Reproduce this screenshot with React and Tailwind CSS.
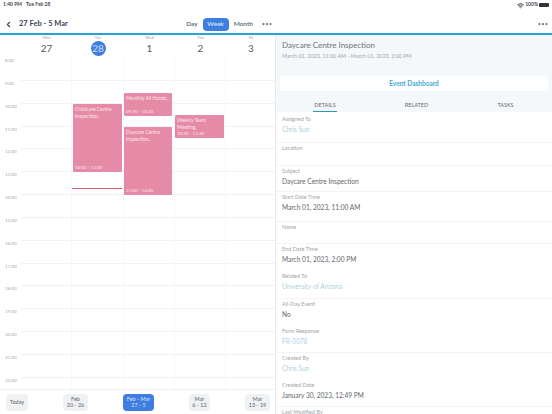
import React from 'react';
import { ChevronLeft, MoreHorizontal, Wifi } from 'lucide-react';

const days = [
  { name: 'Mon', num: '27' },
  { name: 'Tue', num: '28', today: true },
  { name: 'Wed', num: '1' },
  { name: 'Thu', num: '2' },
  { name: 'Fri', num: '3' },
];

const hours = ['8:00', '9:00', '10:00', '11:00', '12:00', '13:00', '14:00', '15:00', '16:00', '17:00', '18:00', '19:00', '20:00', '21:00', '22:00'];

const events = [
  { title: 'Childcare Centre Inspection,', time: '10:00 - 13:00', box: 'left-[73px] top-[46px] w-[49px] h-[68px]' },
  { title: 'Monthly All Hands,', time: '09:30 - 10:30', box: 'left-[124px] top-[35px] w-[48px] h-[23px]' },
  { title: 'Daycare Centre Inspection,', time: '11:00 - 14:00', box: 'left-[124px] top-[69px] w-[48px] h-[68px]' },
  { title: 'Weekly Team Meeting,', time: '10:30 - 11:30', box: 'left-[175px] top-[57px] w-[49px] h-[23px]' },
];

const weeks = [
  { top: 'Today', w: 'w-[22px]' },
  { top: 'Feb', bottom: '20 - 26', w: 'w-[25px]' },
  { top: 'Feb - Mar', bottom: '27 - 5', w: 'w-[31px]', active: true },
  { top: 'Mar', bottom: '6 - 12', w: 'w-[21px]' },
  { top: 'Mar', bottom: '13 - 19', w: 'w-[25px]' },
];

const fields = [
  { label: 'Assigned To', value: 'Chris Sun', link: true, h: 'h-[29px]', line: true },
  { label: 'Location', h: 'h-[23px]', line: true },
  { label: 'Subject', value: 'Daycare Centre Inspection', h: 'h-[26px]', line: true },
  { label: 'Start Date Time', value: 'March 01, 2023, 11:00 AM', h: 'h-[30px]', line: true },
  { label: 'Name', h: 'h-[22px]', line: true },
  { label: 'End Date Time', value: 'March 01, 2023, 2:00 PM', h: 'h-[27px]' },
  { label: 'Related To', value: 'University of Arizona', link: true, h: 'h-[28px]', line: true },
  { label: 'All-Day Event', value: 'No', h: 'h-[27px]' },
  { label: 'Form Response', value: 'FR-0078', link: true, h: 'h-[27px]', line: true },
  { label: 'Created By', value: 'Chris Sun', link: true, h: 'h-[27px]' },
  { label: 'Created Date', value: 'January 30, 2023, 12:49 PM', h: 'h-[27px]', line: true },
  { label: 'Last Modified By', h: 'h-[27px]' },
];

export default function App() {
  return (
    <div className="w-[552px] h-[414px] overflow-hidden bg-white font-['Lato',sans-serif] text-[#3b4350]">
      {/* status bar + toolbars */}
      <div className="h-[33px] flex flex-col">
        <div className="h-[9px] pl-[3px] pr-[3px] pt-[1px] flex items-center justify-between text-[5px] font-bold text-[#3f4650]">
          <div className="flex gap-[4px]">
            <span>1:40 PM</span>
            <span>Tue Feb 28</span>
          </div>
          <div className="flex items-center gap-[1px]">
            <Wifi size={7} strokeWidth={3} />
            <span>100%</span>
            <span className="w-[10px] h-[4px] bg-[#333] rounded-[1px]" />
          </div>
        </div>
        <div className="flex-1 flex items-center pt-[6px]">
          <div className="w-[276px] flex items-center pl-[4px] pr-[3px]">
            <ChevronLeft size={9} strokeWidth={3} className="text-[#3a4658]" />
            <span className="ml-[6px] text-[7.5px] font-bold text-[#3a4658]">27 Feb - 5 Mar</span>
            <div className="ml-auto flex items-center text-[6.5px] font-semibold text-[#55606e]">
              <span className="mr-[5px]">Day</span>
              <span className="w-[26px] h-[13px] rounded-[4px] bg-[#3d7ee0] text-[#d7e5fa] flex items-center justify-center">Week</span>
              <span className="ml-[5px] mr-[8px]">Month</span>
              <MoreHorizontal size={12} strokeWidth={2.5} className="text-[#6c7480]" />
            </div>
          </div>
          <div className="w-[276px] flex items-center justify-end pr-[3px]">
            <MoreHorizontal size={12} strokeWidth={2.5} className="text-[#6c7480]" />
          </div>
        </div>
      </div>
      <div className="h-[2px] bg-[#29a3d6]" />

      <div className="flex h-[379px]">
        {/* calendar */}
        <div className="w-[276px] shrink-0 flex flex-col border-r border-[#e6e8eb] overflow-hidden">
          <div className="h-[23px] shrink-0 grid grid-cols-[21px_51px_52px_51px_51px_50px]">
            <div />
            {days.map((d) => (
              <div key={d.name} className="flex flex-col items-center">
                <span className="text-[4px] leading-[5px] text-[#9a9ea3]">{d.name}</span>
                <span className={`mt-[1px] w-[15px] h-[15px] rounded-full flex items-center justify-center text-[10px] ${d.today ? 'bg-[#3d7ee0] text-[#cfdff8]' : 'text-[#55595f]'}`}>
                  {d.num}
                </span>
              </div>
            ))}
          </div>
          <div className="relative h-[332px] shrink-0 border-b border-[#eef0f2] overflow-hidden">
            <div className="absolute inset-0 left-[21px] grid grid-cols-[51px_52px_51px_51px_50px] divide-x divide-[#f6f7f8]">
              <div /><div /><div /><div /><div />
            </div>
            <div className="flex flex-col">
              {hours.map((h) => (
                <div key={h} className="h-[22.85px] shrink-0 flex">
                  <span className="w-[21px] pl-[5px] text-[4.5px] leading-[6px] text-[#a5a9ae]">{h}</span>
                  <div className="flex-1 border-b border-[#f1f2f4]" />
                </div>
              ))}
            </div>
            {events.map((e) => (
              <div key={e.title} className={`absolute ${e.box} rounded-[1px] bg-[#e68ba7] px-[2px] py-[2px] flex flex-col justify-between text-[5px] leading-[6.5px] text-[#fbe3ea]`}>
                <span>{e.title}</span>
                <span className="text-[4.5px] leading-[5px]">{e.time}</span>
              </div>
            ))}
            <div className="absolute left-[72px] top-[130px] w-[50px] h-[1px] bg-[#df6277]" />
          </div>
          <div className="flex-1 flex items-center justify-between pl-[6px] pr-[5px] text-[5.5px] text-[#5c6470]">
            {weeks.map((w) => (
              <div key={w.top + w.bottom} className={`${w.w} h-[17px] rounded-[4px] flex flex-col items-center justify-center leading-[6.5px] ${w.active ? 'bg-[#3d7ee0] text-[#d7e5fa]' : 'bg-[#f0f1f3]'}`}>
                <span>{w.top}</span>
                {w.bottom && <span>{w.bottom}</span>}
              </div>
            ))}
          </div>
        </div>

        {/* event detail */}
        <div className="w-[276px] shrink-0 flex flex-col overflow-hidden">
          <div className="h-[77px] shrink-0 bg-[#f5f8fa] flex flex-col">
            <div className="pl-[6px] pt-[5px] text-[8px] leading-[11px] text-[#6f7378]">Daycare Centre Inspection</div>
            <div className="pl-[6px] pt-[1px] text-[5.4px] leading-[8px] text-[#a2a6ab]">March 01, 2023, 11:00 AM  -  March 01, 2023, 2:00 PM</div>
            <div className="mx-[4px] mt-[16px] h-[15px] shrink-0 bg-white rounded-[1px] flex items-center justify-center text-[6.5px] font-bold text-[#45a8d2]">Event Dashboard</div>
            <div className="mt-[11px] flex-1 grid grid-cols-[98px_85px_93px] text-center text-[5.5px] leading-[7px] text-[#626870]">
              <div className="flex justify-center">
                <span className="h-[10px] px-[1px] border-b border-[#2f95b8]">DETAILS</span>
              </div>
              <div>RELATED</div>
              <div>TASKS</div>
            </div>
          </div>
          <div className="flex-1 flex flex-col bg-white pt-[2px]">
            {fields.map((f) => (
              <div key={f.label} className={`${f.h} shrink-0 pl-[6px] ${f.line ? 'border-b border-[#f3f4f6]' : ''}`}>
                <div className="pt-[2px] text-[5.5px] leading-[7px] text-[#a0a4a9]">{f.label}</div>
                {f.value && (
                  <div className={`mt-[1px] text-[6.6px] leading-[10px] ${f.link ? 'text-[#b0d0de]' : 'text-[#63676c]'}`}>{f.value}</div>
                )}
              </div>
            ))}
          </div>
        </div>
      </div>
    </div>
  );
}
